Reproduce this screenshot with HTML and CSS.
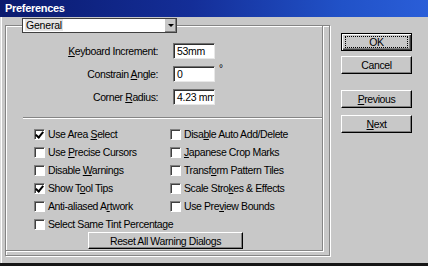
FILE: index.html
```html
<!DOCTYPE html>
<html>
<head>
<meta charset="utf-8">
<link rel="stylesheet" href="styles.css">
</head>
<body>
<div class="win">
  <div class="title">Preferences</div>
  <div class="main">
    <div class="frame">
      <div class="inner">
        <div class="combo"><span class="combo-text"><span class="sel">General</span></span><span class="combo-btn"><span class="tri"></span></span></div>
        <div class="fields">
          <div class="row"><span class="lbl"><u>K</u>eyboard Increment:</span><span class="inp">53mm</span></div>
          <div class="row"><span class="lbl">Constrain <u>A</u>ngle:</span><span class="inp">0</span><span class="deg">°</span></div>
          <div class="row"><span class="lbl">Corner <u>R</u>adius:</span><span class="inp">4.23 mm</span></div>
        </div>
        <div class="sep"></div>
        <div class="checks">
          <div class="chk"><span class="box on"></span><span class="txt">Use Area <u>S</u>elect</span></div>
          <div class="chk"><span class="box"></span><span class="txt">Disa<u>b</u>le Auto Add/Delete</span></div>
          <div class="chk"><span class="box"></span><span class="txt">Use <u>P</u>recise Cursors</span></div>
          <div class="chk"><span class="box"></span><span class="txt"><u>J</u>apanese Crop Marks</span></div>
          <div class="chk"><span class="box"></span><span class="txt">Disable <u>W</u>arnings</span></div>
          <div class="chk"><span class="box"></span><span class="txt">Transf<u>o</u>rm Pattern Tiles</span></div>
          <div class="chk"><span class="box on"></span><span class="txt">Show T<u>o</u>ol Tips</span></div>
          <div class="chk"><span class="box"></span><span class="txt">Scale Stro<u>k</u>es &amp; Effects</span></div>
          <div class="chk"><span class="box"></span><span class="txt">Anti-aliased A<u>r</u>twork</span></div>
          <div class="chk"><span class="box"></span><span class="txt">Use Pre<u>v</u>iew Bounds</span></div>
          <div class="chk"><span class="box"></span><span class="txt">Select Same Tint Percentage</span></div>
        </div>
        <div class="reset"><span class="btn wide"><span>Reset All Warning Dialogs</span></span></div>
      </div>
    </div>
    <div class="side">
      <span class="btn def"><span class="focus">OK</span></span>
      <span class="btn cancel"><span>Cancel</span></span>
      <span class="btn prev"><span><u>P</u>revious</span></span>
      <span class="btn next"><span><u>N</u>ext</span></span>
    </div>
  </div>
</div>
</body>
</html>
```
FILE: styles.css
```css
html, body { margin: 0; padding: 0; }
body {
  width: 428px; height: 266px; overflow: hidden;
  background: #161616;
  font-family: "Liberation Sans", Arial, sans-serif;
  font-size: 10.5px; color: #000;
}
.win {
  height: 263px;
  background: #c8c8c8;
  box-shadow: inset 1px 0 0 #dcdcdc, inset 2px 0 0 #fff;
  display: flex; flex-direction: column;
}
.title {
  height: 17px; box-sizing: border-box;
  padding: 2px 0 0 5px;
  background: linear-gradient(90deg, #0a1a6e 0%, #142e98 45%, #2152c8 80%, #2a5ed8 100%);
  color: #fff; font-weight: bold; font-size: 11px; letter-spacing: -0.3px;
}
.main { display: flex; padding-left: 5px; }
.frame {
  margin-top: 8px;
  width: 325px; height: 231px; box-sizing: border-box;
  border: 1px solid #858585;
  box-shadow: inset 1px 1px 0 #fff, 1px 1px 0 #fff;
  display: flex;
}
.inner {
  width: 316px; height: 224px;
  border-right: 1px solid #858585; border-bottom: 1px solid #858585;
  box-shadow: 1px 1px 0 #fff;
  display: flex; flex-direction: column;
}
.combo {
  margin: -8px 0 0 16px;
  width: 155px; height: 15px; box-sizing: border-box;
  background: #fff; border: 1px solid #404040;
  display: flex;
}
.combo-text { flex: 1; padding: 0 0 0 2px; line-height: 13px; letter-spacing: -0.2px; }
.sel { background: #e4e4e4; padding: 0 1px; }
.combo-btn {
  width: 11px; background: #c8c8c8;
  border-left: 1px solid #fff; box-shadow: inset -1px -1px 0 #808080;
  display: flex; align-items: center; justify-content: center;
}
.tri { width: 0; height: 0; border-left: 3px solid transparent; border-right: 3px solid transparent; border-top: 3px solid #000; }
.fields { margin-top: 10px; display: flex; flex-direction: column; gap: 7px; }
.row { display: flex; align-items: center; height: 16px; }
.lbl { width: 152px; text-align: right; letter-spacing: -0.4px; }
.inp {
  margin-left: 15px; width: 42px; height: 16px; box-sizing: border-box;
  background: #fff; border-top: 1px solid #707070; border-left: 1px solid #707070;
  border-right: 1px solid #e8e8e8; border-bottom: 1px solid #e8e8e8;
  box-shadow: inset 1px 1px 0 #303030;
  padding-left: 3px; line-height: 14px; overflow: hidden; white-space: nowrap;
  letter-spacing: -0.3px;
}
.deg { align-self: flex-start; margin: -3px 0 0 4px; font-size: 10px; }
.sep {
  margin: 12px 0 0 17px; height: 0;
  border-top: 1px solid #858585; border-bottom: 1px solid #fff;
}
.checks {
  margin: 6px 0 0 28px;
  display: grid; grid-template-columns: 136px 150px; grid-auto-rows: 18px;
}
.chk { display: flex; align-items: center; white-space: nowrap; }
.txt { letter-spacing: -0.4px; }
.box {
  width: 11px; height: 11px; box-sizing: border-box; margin-right: 3px; flex: none;
  background: #fff;
  border-top: 1px solid #808080; border-left: 1px solid #808080;
  border-right: 1px solid #fff; border-bottom: 1px solid #fff;
  box-shadow: inset 1px 1px 0 #404040;
  position: relative;
}
.box.on::after {
  content: ""; position: absolute; left: 2px; top: 0px;
  width: 3px; height: 6px;
  border-right: 2px solid #000; border-bottom: 2px solid #000;
  transform: rotate(40deg);
}
.reset { margin: -1px 0 0 82px; display: flex; }
.btn {
  display: flex; align-items: center; justify-content: center; box-sizing: border-box;
  background: #c8c8c8;
  border-top: 1px solid #fff; border-left: 1px solid #fff;
  border-right: 1px solid #000; border-bottom: 1px solid #000;
  box-shadow: inset -1px -1px 0 #808080;
  letter-spacing: -0.4px;
}
.wide { width: 155px; height: 17px; }
.side { margin-left: 11px; display: flex; flex-direction: column; }
.side .btn { width: 71px; height: 18px; }
.def { margin-top: 16px; border: 1px solid #000; box-shadow: inset 1px 1px 0 #fff, inset -1px -1px 0 #404040, inset -2px -2px 0 #808080; }
.focus { outline: 1px dotted #000; outline-offset: 0; width: 61px; height: 10px; display: flex; align-items: center; justify-content: center; }
.cancel { margin-top: 5px; }
.prev { margin-top: 16px; }
.next { margin-top: 7px; }
```
